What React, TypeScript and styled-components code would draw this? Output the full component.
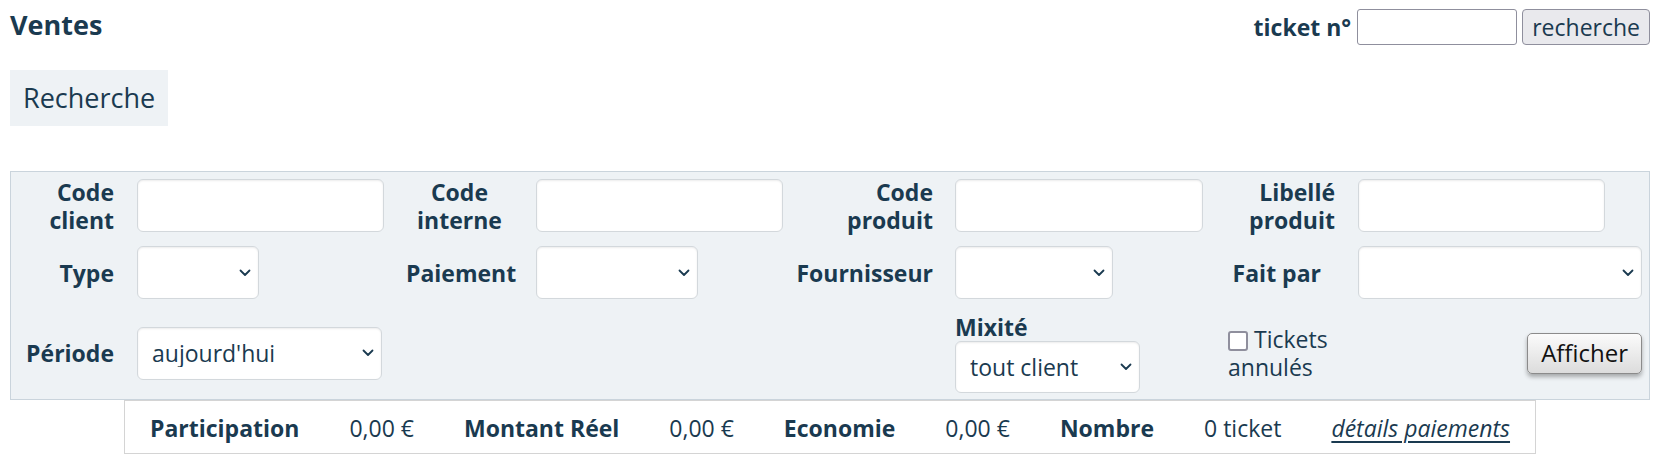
import React from "react";
import styled, { createGlobalStyle } from "styled-components";

const ink = "#1a3a50";

const GlobalStyle = createGlobalStyle`
  html, body {
    margin: 0;
    background: #ffffff;
  }
  body {
    font-family: "Open Sans", "Noto Sans", sans-serif;
    font-size: 23px;
    line-height: 28px;
    color: ${ink};
  }
  * {
    box-sizing: border-box;
  }
`;

const Page = styled.div`
  padding: 9px 7px 0 10px;
`;

const Header = styled.header`
  display: flex;
  justify-content: space-between;
  align-items: flex-start;
`;

const Title = styled.h1`
  margin: 0;
  font-size: 27px;
  line-height: 32px;
  font-weight: 700;
`;

const TicketSearch = styled.form`
  display: flex;
  align-items: center;
  height: 36px;
`;

const TicketLabel = styled.label`
  font-weight: 700;
  margin-right: 6px;
`;

const TicketInput = styled.input`
  width: 160px;
  height: 36px;
  margin: 0 5px 0 0;
  padding: 0 6px;
  font: inherit;
  color: inherit;
  background: #ffffff;
  border: 1px solid #8f8f9d;
  border-radius: 3px;
`;

const TicketButton = styled.button`
  height: 36px;
  padding: 0 9px;
  font: inherit;
  color: ${ink};
  background: #e9e9ed;
  border: 1px solid #8f8f9d;
  border-radius: 4px;
`;

const Tab = styled.div`
  width: fit-content;
  margin-top: 25px;
  padding: 12px 13px;
  font-size: 27px;
  line-height: 32px;
  background: #eef2f5;
`;

const Panel = styled.form`
  display: grid;
  grid-template-columns: 126px 247px 152px 247px 172px 248px 155px 284px;
  grid-template-rows: 53px 53px 80px;
  row-gap: 14px;
  align-items: center;
  margin-top: 45px;
  padding: 7px 7px 6px 0;
  background: #eef2f5;
  border: 1px solid #cad4dc;
`;

const FieldLabel = styled.label<{ $col: number; $align?: "right" | "center"; $pl?: number; $pr?: number }>`
  grid-column: ${(p) => p.$col};
  font-weight: 700;
  text-align: ${(p) => p.$align ?? "right"};
  padding: 0 ${(p) => p.$pr ?? 23}px 0 ${(p) => p.$pl ?? 0}px;
`;

const TextInput = styled.input<{ $w: number }>`
  width: ${(p) => p.$w}px;
  height: 53px;
  margin: 0;
  padding: 0 14px;
  font: inherit;
  color: inherit;
  background: #ffffff;
  border: 1px solid #d3d8dc;
  border-radius: 6px;
  box-shadow: inset 0 1px 2px rgba(0, 0, 0, 0.08);
`;

const SelectBox = styled.div<{ $w: number; $h?: number }>`
  position: relative;
  width: ${(p) => p.$w}px;
  height: ${(p) => p.$h ?? 53}px;
`;

const Select = styled.select`
  appearance: none;
  width: 100%;
  height: 100%;
  margin: 0;
  padding: 0 30px 0 14px;
  font: inherit;
  color: inherit;
  background: #ffffff;
  border: 1px solid #d3d8dc;
  border-radius: 6px;
  box-shadow: inset 0 1px 2px rgba(0, 0, 0, 0.08);
`;

const ChevronIcon = styled.svg`
  position: absolute;
  right: 8px;
  top: 50%;
  transform: translateY(-50%);
  pointer-events: none;
`;

const Cell = styled.div<{ $col: number }>`
  grid-column: ${(p) => p.$col};
`;

const Stack = styled.div`
  grid-column: 6;
  display: flex;
  flex-direction: column;
`;

const StackLabel = styled.label`
  font-weight: 700;
  line-height: 28px;
`;

const CheckLabel = styled.label`
  grid-column: 7;
  padding: 0 23px 0 25px;
`;

const CheckBox = styled.input`
  appearance: none;
  width: 20px;
  height: 20px;
  margin: 0 6px 0 0;
  vertical-align: -3px;
  background: #ffffff;
  border: 2px solid #8f8f9d;
  border-radius: 3px;
`;

const SubmitButton = styled.button`
  grid-column: 8;
  justify-self: end;
  height: 41px;
  padding: 0 13px;
  font: inherit;
  font-size: 24px;
  color: #111111;
  background: linear-gradient(#fbfbfb, #dcdcdc);
  border: 1px solid #8b8b8b;
  border-radius: 5px;
  box-shadow: 0 3px 4px rgba(0, 0, 0, 0.3);
`;

const SummaryRow = styled.div`
  display: flex;
  justify-content: center;
`;

const Summary = styled.div`
  display: flex;
  padding: 13px 0 11px;
  background: #ffffff;
  border: 1px solid #d4d4d4;
`;

const Stat = styled.span<{ $bold?: boolean }>`
  padding: 0 25px;
  font-weight: ${(p) => (p.$bold ? 700 : 400)};
  white-space: nowrap;
`;

const DetailsLink = styled.a`
  padding: 0 25px;
  color: inherit;
  font-style: italic;
  text-decoration: underline;
  text-decoration-thickness: 2px;
  text-underline-offset: 4px;
  white-space: nowrap;
`;

const Chevron = () => (
  <ChevronIcon width="12" height="8" viewBox="0 0 12 8">
    <path d="M1.5 1.5 L6 6 L10.5 1.5" fill="none" stroke={ink} strokeWidth="1.8" strokeLinecap="round" strokeLinejoin="round" />
  </ChevronIcon>
);

const Dropdown = ({ width, height, options = [""] }: { width: number; height?: number; options?: string[] }) => (
  <SelectBox $w={width} $h={height}>
    <Select defaultValue={options[0]}>
      {options.map((o) => (
        <option key={o} value={o}>
          {o}
        </option>
      ))}
    </Select>
    <Chevron />
  </SelectBox>
);

const stats: { label: string; value: string }[] = [
  { label: "Participation", value: "0,00 €" },
  { label: "Montant Réel", value: "0,00 €" },
  { label: "Economie", value: "0,00 €" },
  { label: "Nombre", value: "0 ticket" },
];

export default function App() {
  return (
    <>
      <GlobalStyle />
      <Page>
        <Header>
          <Title>Ventes</Title>
          <TicketSearch onSubmit={(e) => e.preventDefault()}>
            <TicketLabel htmlFor="ticket">ticket n°</TicketLabel>
            <TicketInput id="ticket" type="text" />
            <TicketButton type="submit">recherche</TicketButton>
          </TicketSearch>
        </Header>

        <Tab>Recherche</Tab>

        <Panel onSubmit={(e) => e.preventDefault()}>
          <FieldLabel $col={1}>
            Code
            <br />
            client
          </FieldLabel>
          <Cell $col={2}>
            <TextInput $w={247} type="text" />
          </Cell>
          <FieldLabel $col={3} $align="center" $pl={22}>
            Code
            <br />
            interne
          </FieldLabel>
          <Cell $col={4}>
            <TextInput $w={247} type="text" />
          </Cell>
          <FieldLabel $col={5} $pr={22}>
            Code
            <br />
            produit
          </FieldLabel>
          <Cell $col={6}>
            <TextInput $w={248} type="text" />
          </Cell>
          <FieldLabel $col={7}>
            Libellé
            <br />
            produit
          </FieldLabel>
          <Cell $col={8}>
            <TextInput $w={247} type="text" />
          </Cell>

          <FieldLabel $col={1}>Type</FieldLabel>
          <Cell $col={2}>
            <Dropdown width={122} />
          </Cell>
          <FieldLabel $col={3} $align="center" $pl={22}>
            Paiement
          </FieldLabel>
          <Cell $col={4}>
            <Dropdown width={162} />
          </Cell>
          <FieldLabel $col={5} $pr={22}>
            Fournisseur
          </FieldLabel>
          <Cell $col={6}>
            <Dropdown width={158} />
          </Cell>
          <FieldLabel $col={7} $pr={37}>
            Fait par
          </FieldLabel>
          <Cell $col={8}>
            <Dropdown width={284} />
          </Cell>

          <FieldLabel $col={1}>Période</FieldLabel>
          <Cell $col={2}>
            <Dropdown width={245} options={["aujourd'hui", "hier", "cette semaine", "ce mois"]} />
          </Cell>
          <Stack>
            <StackLabel>Mixité</StackLabel>
            <Dropdown width={185} height={52} options={["tout client"]} />
          </Stack>
          <CheckLabel>
            <CheckBox type="checkbox" />
            Tickets annulés
          </CheckLabel>
          <SubmitButton type="submit">Afficher</SubmitButton>
        </Panel>

        <SummaryRow>
          <Summary>
            {stats.map((s) => (
              <React.Fragment key={s.label}>
                <Stat $bold>{s.label}</Stat>
                <Stat>{s.value}</Stat>
              </React.Fragment>
            ))}
            <DetailsLink href="#">détails paiements</DetailsLink>
          </Summary>
        </SummaryRow>
      </Page>
    </>
  );
}
